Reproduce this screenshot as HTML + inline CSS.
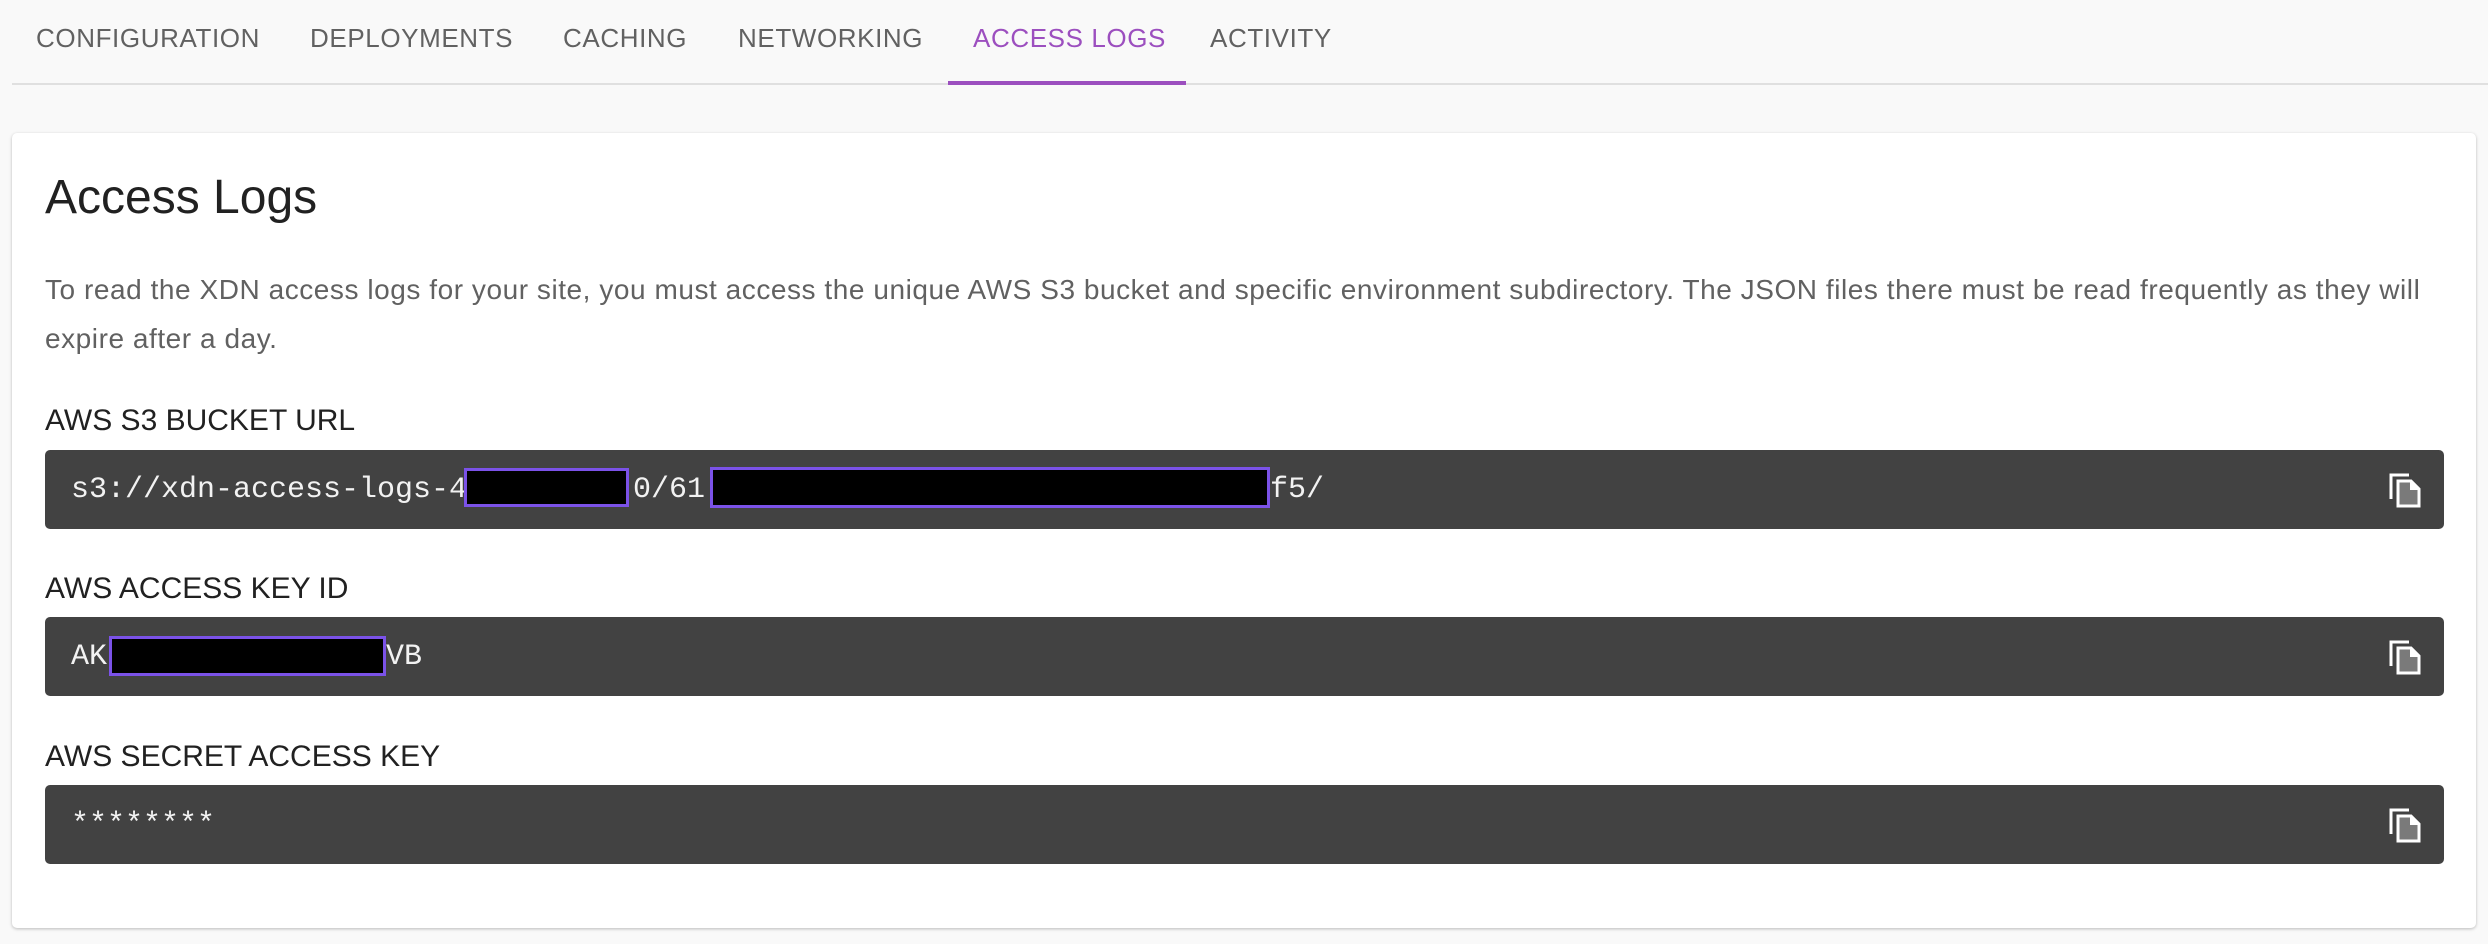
<!DOCTYPE html>
<html><head><meta charset="utf-8"><style>
*{margin:0;padding:0;box-sizing:border-box}
body{width:2488px;height:944px;background:#f9f9f9;font-family:"Liberation Sans",Arial,sans-serif;position:relative;overflow:hidden}
.tab{position:absolute;top:23px;font-size:26px;color:#616161;letter-spacing:0.6px;white-space:nowrap;font-weight:500}
.line{position:absolute;left:12px;right:0;top:83px;height:2px;background:#e0e0e0}
.ind{position:absolute;left:948px;width:238px;top:81px;height:4px;background:#9c4fbf}
.card{position:absolute;left:12px;top:133px;width:2464px;height:795px;background:#fff;border-radius:5px;box-shadow:0 1px 3px rgba(0,0,0,.25)}
h1{position:absolute;left:45px;top:170px;font-size:48px;font-weight:400;color:#212121}
p{position:absolute;left:45px;top:265px;width:2420px;font-size:28px;letter-spacing:0.55px;line-height:49px;color:#616161;white-space:nowrap}
.lbl{position:absolute;left:45px;font-size:30px;color:#212121}
.box{position:absolute;left:45px;width:2399px;height:79px;background:#424242;border-radius:5px}
.mono{position:absolute;top:1px;line-height:79px;font-family:"Liberation Mono","DejaVu Sans Mono",monospace;font-size:30px;color:#f2f2f2;white-space:pre}
.red{position:absolute;background:#000;border:3px solid #7b52e8}
.ic{position:absolute;right:21px;top:22px}
</style></head><body>
<div class="tab" style="left:36px">CONFIGURATION</div>
<div class="tab" style="left:310px">DEPLOYMENTS</div>
<div class="tab" style="left:563px">CACHING</div>
<div class="tab" style="left:738px">NETWORKING</div>
<div class="tab" style="left:973px;color:#9c4fbf">ACCESS LOGS</div>
<div class="tab" style="left:1210px">ACTIVITY</div>
<div class="line"></div><div class="ind"></div>
<div class="card"></div>
<h1>Access Logs</h1>
<p>To read the XDN access logs for your site, you must access the unique AWS S3 bucket and specific environment subdirectory. The JSON files there must be read frequently as they will<br>expire after a day.</p>
<div class="lbl" style="top:404px">AWS S3 BUCKET URL</div>
<div class="box" style="top:450px">
<div class="mono" style="left:26px">s3://xdn-access-logs-4</div>
<div class="mono" style="left:588px">0/61</div>
<div class="mono" style="left:1225px">f5/</div>
<div class="red" style="left:419px;top:18px;width:165px;height:39px"></div>
<div class="red" style="left:665px;top:17px;width:560px;height:41px"></div>
<svg class="ic" width="34" height="36" viewBox="0 0 34 36"><path d="M2 27V3h18" fill="none" stroke="#fff" stroke-width="3"/><path d="M9 9h13l8 8v17H9z" fill="#7a7a7a" stroke="#fff" stroke-width="3" stroke-linejoin="miter"/><path d="M21 9v9h9" fill="#fff"/></svg>
</div>
<div class="lbl" style="top:572px">AWS ACCESS KEY ID</div>
<div class="box" style="top:617px">
<div class="mono" style="left:26px">AK</div>
<div class="mono" style="left:341px">VB</div>
<div class="red" style="left:64px;top:19px;width:277px;height:40px"></div>
<svg class="ic" width="34" height="36" viewBox="0 0 34 36"><path d="M2 27V3h18" fill="none" stroke="#fff" stroke-width="3"/><path d="M9 9h13l8 8v17H9z" fill="#7a7a7a" stroke="#fff" stroke-width="3"/><path d="M21 9v9h9" fill="#fff"/></svg>
</div>
<div class="lbl" style="top:740px">AWS SECRET ACCESS KEY</div>
<div class="box" style="top:785px">
<div class="mono" style="left:26px">********</div>
<svg class="ic" width="34" height="36" viewBox="0 0 34 36"><path d="M2 27V3h18" fill="none" stroke="#fff" stroke-width="3"/><path d="M9 9h13l8 8v17H9z" fill="#7a7a7a" stroke="#fff" stroke-width="3"/><path d="M21 9v9h9" fill="#fff"/></svg>
</div>
</body></html>
